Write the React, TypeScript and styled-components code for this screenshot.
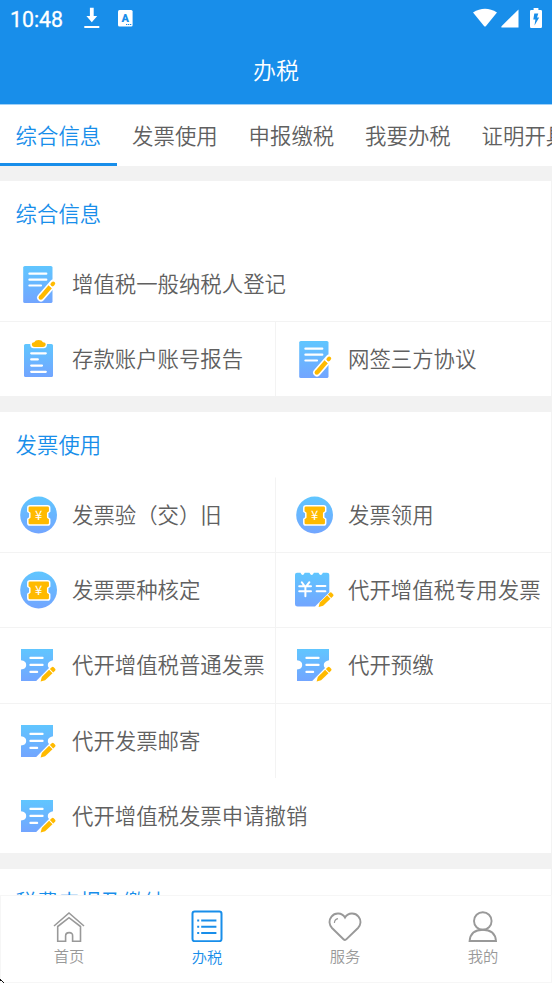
import React from "react";
import styled, { createGlobalStyle } from "styled-components";

const BLUE = "#188eea";
const LINE = "#f3f3f3";

const GlobalStyle = createGlobalStyle`
  * { box-sizing: border-box; }
  body {
    margin: 0;
    font-family: Roboto, "Noto Sans CJK SC", sans-serif;
    font-weight: 350;
  }
`;

const Screen = styled.div`
  width: 552px;
  height: 983px;
  overflow: hidden;
  display: flex;
  flex-direction: column;
  background: #fff;
`;

const Header = styled.header`
  flex: none;
  height: 105px;
  background: ${BLUE};
  border-bottom: 1px solid #9fd0f7;
  color: #fff;
`;

const StatusBar = styled.div`
  height: 37px;
  padding: 0 10px 1px 10px;
  display: flex;
  align-items: center;
  justify-content: space-between;
`;

const StatusGroup = styled.div`
  display: flex;
  align-items: center;
`;

const Clock = styled.span`
  width: 73px;
  font: 400 21.3px/36px Roboto, sans-serif;
  padding-top: 3px;
  -webkit-text-stroke: 0.3px #fff;
`;

const StatusIcon = styled.svg<{ $gap?: number }>`
  display: block;
  margin-right: ${(p) => p.$gap ?? 0}px;
`;

const Title = styled.h1`
  margin: 0;
  height: 67px;
  text-align: center;
  font-size: 23px;
  font-weight: inherit;
  line-height: 69px;
`;

const Tabs = styled.nav`
  flex: none;
  display: flex;
  height: 61px;
  overflow: hidden;
`;

const Tab = styled.div<{ $active?: boolean }>`
  flex: none;
  width: 116.5px;
  padding-left: 15.6px;
  font-size: 21.4px;
  line-height: 63px;
  white-space: nowrap;
  color: ${(p) => (p.$active ? BLUE : "#606060")};
  box-shadow: ${(p) => (p.$active ? `inset 0 -3px ${BLUE}` : "none")};
`;

const Content = styled.main`
  flex: 1;
  min-height: 0;
  overflow: hidden;
  padding-top: 15px;
  display: flex;
  flex-direction: column;
  gap: 16px;
  background: #f2f2f2;
`;

const Section = styled.section`
  flex: none;
  background: #fff;
  border-right: 1px solid ${LINE};
`;

const SectionTitle = styled.h2`
  margin: 0;
  height: 64.8px;
  padding-left: 15.6px;
  font-size: 21.4px;
  font-weight: inherit;
  line-height: 68px;
  color: ${BLUE};
`;

const Grid = styled.div`
  display: grid;
  grid-template-columns: 276px 1fr;
  grid-auto-rows: 75.2px;
`;

const Cell = styled.div<{ $wide?: boolean; $split?: boolean; $ruled?: boolean }>`
  grid-column: ${(p) => (p.$wide ? "1 / -1" : "auto")};
  display: flex;
  align-items: center;
  gap: 13px;
  padding-left: 19px;
  font-size: 21.4px;
  line-height: 30px;
  white-space: nowrap;
  color: #606060;
  border-top: 1px solid ${(p) => (p.$ruled ? LINE : "transparent")};
  border-right: ${(p) => (p.$split ? `1px solid ${LINE}` : "0")};
`;

const CellLabel = styled.span`
  padding-top: 2px;
`;

const CellIcon = styled.svg`
  flex: none;
  width: 40px;
  height: 40px;
  overflow: visible;
`;

const BottomNav = styled.footer`
  flex: none;
  position: relative;
  height: 88px;
  display: grid;
  grid-template-columns: repeat(4, 1fr);
  background: #fff;
  box-shadow: inset 0 0 0 1px #f6f6f6;
`;

const NavItem = styled.div<{ $active?: boolean }>`
  display: flex;
  flex-direction: column;
  align-items: center;
  padding-top: 14px;
  color: ${(p) => (p.$active ? BLUE : "#999")};
`;

const NavLabel = styled.span<{ $active?: boolean }>`
  margin-top: ${(p) => (p.$active ? 5 : 4)}px;
  font-size: 15.3px;
  line-height: 22px;
`;

const CornerMark = styled.svg`
  position: absolute;
  left: 0;
  bottom: 0;
`;

const Defs = () => (
  <defs>
    <linearGradient id="sky" x1="0" y1="0" x2="0" y2="1">
      <stop offset="0" stopColor="#60c6ff" />
      <stop offset="1" stopColor="#72a5ff" />
    </linearGradient>
  </defs>
);

const Pencil = ({ x, y }: { x: number; y: number }) => (
  <g transform={`translate(${x} ${y}) rotate(-44)`} fill="#ffba00">
    <path d="M0 0L4 -2.4H14.2V2.4H4Z" />
    <path d="M15.2 -2.4H17.8Q19.2 -2.4 19.2 -1V1Q19.2 2.4 17.8 2.4H15.2Z" />
  </g>
);

const DocIcon = () => (
  <CellIcon viewBox="0 0 40 40">
    <Defs />
    <rect x="4.2" y="2" width="29.3" height="37" rx="1.6" fill="url(#sky)" />
    <path d="M10.4 9.7H27.3M10.4 15.7H27.3M10.4 21.5H22" stroke="#fff" strokeWidth="2.2" strokeLinecap="round" />
    <path d="M22 33.5L34.2 19.5" stroke="#fff" strokeWidth="7.8" strokeLinecap="round" />
    <path d="M22.2 33.2L31.2 22.8" stroke="#ffba00" strokeWidth="4.4" />
    <circle cx="21.8" cy="33.5" r="2.2" fill="#ffba00" />
    <path d="M33.4 20.4L34.2 19.5" stroke="#ffba00" strokeWidth="4" strokeLinecap="round" />
    <path d="M30.4 21L33.5 23.7" stroke="#fff" strokeWidth="1.2" />
  </CellIcon>
);

const ClipboardIcon = () => (
  <CellIcon viewBox="0 0 40 40">
    <Defs />
    <rect x="5" y="5" width="29" height="33" rx="1.5" fill="url(#sky)" />
    <path d="M11.2 5Q11.2 2.2 14.8 2.2Q16 .2 19.6 .2T24.4 2.2Q28 2.2 28 5Q28 9.3 24.5 9.3H14.7Q11.2 9.3 11.2 5Z" fill="#fff" />
    <path d="M12.8 5Q12.8 3.3 15.2 3.2Q16.2 1 19.6 1T24 3.2Q26.7 3.3 26.7 5Q26.7 8 23.7 8H15.7Q12.8 8 12.8 5Z" fill="#ffba00" />
    <path d="M12.2 14.3H26.8M12.2 20.4H18.8M12.2 26.6H23M12.2 32.8H26.8" stroke="#fff" strokeWidth="2.2" strokeLinecap="round" />
  </CellIcon>
);

const CoinIcon = () => (
  <CellIcon viewBox="0 0 40 40">
    <Defs />
    <circle cx="19.6" cy="20" r="18.4" fill="url(#sky)" />
    <path
      d="M11 10.8H28.5Q30.7 10.8 30.7 12.8V16.5L28.7 18V22.5L30.7 24V27.9Q30.7 30 28.5 30H11Q8.8 30 8.8 27.9V24L10.8 22.5V18L8.8 16.5V12.8Q8.8 10.8 11 10.8Z"
      fill="#ffba00" stroke="#fff" strokeWidth="1.5" strokeLinejoin="round"
    />
    <text x="19.7" y="25" textAnchor="middle" fontFamily="Noto Sans CJK SC" fontSize="13" fontWeight="400" fill="#fff">¥</text>
  </CellIcon>
);

const CalendarIcon = () => (
  <CellIcon viewBox="0 0 40 40">
    <Defs />
    <path
      d="M2 2.8H5.5Q7.7 7.3 9.7 2.8H14.5Q16.7 7.3 18.9 2.8H23.5Q25.7 7.3 27.9 2.8H32Q34.3 2.8 34.3 4.8V22.3L20 36.6H2.5Q0 36.6 0 34.3V4.8Q0 2.8 2 2.8Z"
      fill="url(#sky)"
    />
    <path d="M6.8 12.2L10.4 17.4L14.4 12.2M4.2 16.3H16M4.2 21.3H16M10.4 17V26.2M21.6 16.1H30.4M21.6 21.2H30.4" fill="none" stroke="#fff" strokeWidth="2" strokeLinecap="round" />
    <Pencil x={23.6} y={36.9} />
  </CellIcon>
);

const InvoiceIcon = () => (
  <CellIcon viewBox="0 0 40 40">
    <Defs />
    <path
      d="M2 3.9H34V15.3Q28.8 16.5 28.8 19.9Q28.8 21.9 30 23.1L17.2 35.9H2V24.5Q7.2 23.9 7.2 19.9T2 15.3Z"
      fill="url(#sky)"
    />
    <path d="M11.4 12.9H23.6M11.4 19.9H23.6M11.4 26.9H18.2" stroke="#fff" strokeWidth="2.1" strokeLinecap="round" />
    <Pencil x={21.6} y={36.4} />
  </CellIcon>
);

const ICONS = {
  doc: DocIcon,
  clipboard: ClipboardIcon,
  coin: CoinIcon,
  calendar: CalendarIcon,
  invoice: InvoiceIcon,
};

type Item = {
  icon: keyof typeof ICONS;
  label: string;
  wide?: boolean;
  split?: boolean;
  ruled?: boolean;
};

const ServiceCell = ({ icon, label, wide, split, ruled }: Item) => {
  const Icon = ICONS[icon];
  return (
    <Cell $wide={wide} $split={split} $ruled={ruled}>
      <Icon />
      <CellLabel>{label}</CellLabel>
    </Cell>
  );
};

const general: Item[] = [
  { icon: "doc", label: "增值税一般纳税人登记", wide: true },
  { icon: "clipboard", label: "存款账户账号报告", split: true, ruled: true },
  { icon: "doc", label: "网签三方协议", ruled: true },
];

const invoices: Item[] = [
  { icon: "coin", label: "发票验（交）旧", split: true },
  { icon: "coin", label: "发票领用" },
  { icon: "coin", label: "发票票种核定", split: true, ruled: true },
  { icon: "calendar", label: "代开增值税专用发票", ruled: true },
  { icon: "invoice", label: "代开增值税普通发票", split: true, ruled: true },
  { icon: "invoice", label: "代开预缴", ruled: true },
  { icon: "invoice", label: "代开发票邮寄", split: true, ruled: true },
];

const HomeIcon = () => (
  <svg width="32" height="33" viewBox="0 0 32 33" fill="none" stroke="currentColor" strokeWidth="1.6">
    <path d="M1 17L16 4L31 17" />
    <path d="M4.7 17.5V32.2H12.6V27Q12.6 23.6 16.2 23.6T19.6 27V32.2H27.5V17.5L16 8.7Z" />
  </svg>
);

const ListIcon = () => (
  <svg width="32" height="33" viewBox="0 0 32 33" fill="none" stroke="currentColor" strokeWidth="2">
    <rect x="1.5" y="2.6" width="29" height="29.6" rx="2.2" />
    <path d="M6.2 11.5H8.2M10.2 11.5H25.4M6.2 17.8H8.2M10.2 17.8H25.4M6.2 24H8.2M10.2 24H25.4" />
  </svg>
);

const HeartIcon = () => (
  <svg width="34" height="33" viewBox="0 0 34 33" fill="none" stroke="currentColor" strokeWidth="1.9">
    <path d="M17 8.6C13.8 3.3 6.8 3.4 3.5 7.6C.4 11.5 1.3 16.2 4 19L15.5 30.2Q17 31.7 18.5 30.2L30 19C32.7 16.2 33.6 11.5 30.5 7.6C27.2 3.4 20.2 3.3 17 8.6Z" />
    <path d="M6.4 14Q6.6 10.4 10 9.7" strokeWidth="1.2" />
  </svg>
);

const PersonIcon = () => (
  <svg width="32" height="33" viewBox="0 0 32 33" fill="none" stroke="currentColor" strokeWidth="1.9">
    <circle cx="15.8" cy="12" r="8.8" />
    <path d="M2.6 32Q3.6 20.8 15.8 20.8T29 32Z" />
  </svg>
);

export default function App() {
  return (
    <>
      <GlobalStyle />
      <Screen>
        <Header>
          <StatusBar>
            <StatusGroup>
              <Clock>10:48</Clock>
              <StatusIcon $gap={18} width="17" height="22" viewBox="0 0 17 22" fill="#fff">
                <path d="M6.9 .8H10.7V9H14.2L8.8 15.2L3.4 9H6.9ZM1.3 19H16.3V21H1.3Z" />
              </StatusIcon>
              <StatusIcon width="15" height="17" viewBox="0 0 15 17">
                <rect width="14.6" height="16.6" rx="1.5" fill="#fff" />
                <text x="7.2" y="12.2" textAnchor="middle" fontFamily="Roboto" fontWeight="900" fontSize="11" fill={BLUE}>A</text>
                <path d="M8 14.5H14" stroke={BLUE} strokeWidth="1.2" strokeDasharray="1.3 .7" />
              </StatusIcon>
            </StatusGroup>
            <StatusGroup>
              <StatusIcon $gap={4} width="24" height="20" viewBox="0 0 24 20">
                <path d="M0 4.5Q12 -3 24 4.5L13 18Q12 19 11 18Z" fill="#fff" />
              </StatusIcon>
              <StatusIcon $gap={11} width="18" height="19" viewBox="0 0 18 19">
                <path d="M17.5 .5V18.5H.8Q0 18.3 .5 17.2Z" fill="#fff" />
              </StatusIcon>
              <StatusIcon width="12" height="20" viewBox="0 0 12 20">
                <path d="M3.6 0H8.4V2H10.8Q12 2 12 3.2V18.5Q12 20 10.8 20H1.2Q0 20 0 18.5V3.2Q0 2 1.2 2H3.6Z" fill="#fff" />
                <path d="M4.3 5.5H8.3L7 9.5H9.2L4.5 17.5L5.4 11.5H3.3Z" fill={BLUE} />
              </StatusIcon>
            </StatusGroup>
          </StatusBar>
          <Title>办税</Title>
        </Header>
        <Tabs>
          <Tab $active>综合信息</Tab>
          <Tab>发票使用</Tab>
          <Tab>申报缴税</Tab>
          <Tab>我要办税</Tab>
          <Tab>证明开具</Tab>
        </Tabs>
        <Content>
          <Section>
            <SectionTitle>综合信息</SectionTitle>
            <Grid>
              {general.map((item) => <ServiceCell key={item.label} {...item} />)}
            </Grid>
          </Section>
          <Section>
            <SectionTitle>发票使用</SectionTitle>
            <Grid>
              {invoices.map((item) => <ServiceCell key={item.label} {...item} />)}
              <Cell $ruled />
              <ServiceCell icon="invoice" label="代开增值税发票申请撤销" wide />
            </Grid>
          </Section>
          <Section>
            <SectionTitle>税费申报及缴纳</SectionTitle>
          </Section>
        </Content>
        <BottomNav>
          <NavItem><HomeIcon /><NavLabel>首页</NavLabel></NavItem>
          <NavItem $active><ListIcon /><NavLabel $active>办税</NavLabel></NavItem>
          <NavItem><HeartIcon /><NavLabel>服务</NavLabel></NavItem>
          <NavItem><PersonIcon /><NavLabel>我的</NavLabel></NavItem>
          <CornerMark width="4" height="4" viewBox="0 0 4 4">
            <path d="M0 0H1V1H2V2H3V3H4V4H3V3H2V2H0Z" fill="#111" />
          </CornerMark>
        </BottomNav>
      </Screen>
    </>
  );
}
